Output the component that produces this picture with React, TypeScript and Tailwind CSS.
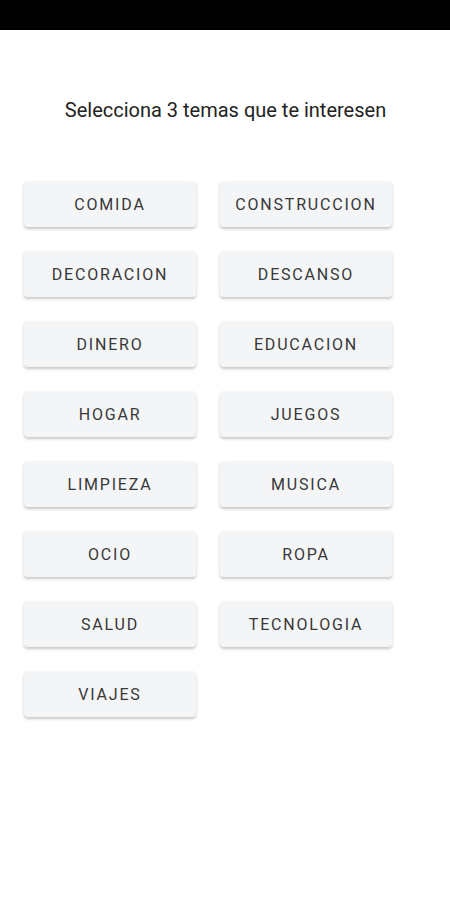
import React from "react";

const topics = [
  "COMIDA", "CONSTRUCCION", "DECORACION", "DESCANSO", "DINERO", "EDUCACION",
  "HOGAR", "JUEGOS", "LIMPIEZA", "MUSICA", "OCIO", "ROPA", "SALUD", "TECNOLOGIA", "VIAJES",
];

export default function App() {
  return (
    <div className="w-[450px] h-[900px] bg-white flex flex-col" style={{ fontFamily: "Roboto, sans-serif" }}>
      <div className="h-[30px] bg-black shrink-0" />
      <div className="pt-[66px] pl-[1px] text-center text-[20px] text-[#222] leading-[28px]">
        Selecciona 3 temas que te interesen
      </div>
      <div className="grid grid-cols-[172px_172px] gap-x-[24px] gap-y-[24px] pl-[24px] pt-[57px]">
        {topics.map((t) => (
          <button
            key={t}
            className="h-[46px] pt-[1px] rounded-[4px] bg-[#f4f5f7] shadow-[0_2px_3px_rgba(0,0,0,0.22)] text-[16px] tracking-[1.8px] text-[#383838]"
          >
            {t}
          </button>
        ))}
      </div>
    </div>
  );
}
